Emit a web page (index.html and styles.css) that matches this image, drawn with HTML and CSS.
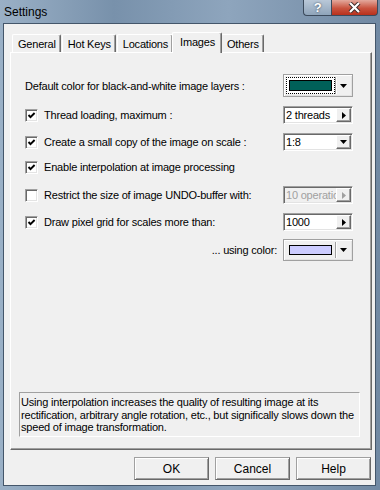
FILE: index.html
```html
<!DOCTYPE html>
<html lang="en">
<head>
    <meta charset="UTF-8">
    <title>Settings</title>
    <link rel="stylesheet" href="styles.css">
</head>
<body>
    <div class="window">
        <div class="titlebar">
            <span class="title">Settings</span>
            <div class="caption">
                <span class="cap cap-help">?</span>
                <span class="cap cap-close">
                    <svg width="13" height="11" viewBox="0 0 13 11"><path d="M2 1 L11 10 M11 1 L2 10" stroke="#3a2a2a" stroke-width="4"/><path d="M2 1 L11 10 M11 1 L2 10" stroke="#fff" stroke-width="2.2"/></svg>
                </span>
            </div>
        </div>
        <div class="client">
            <div class="tabs">
                <div class="tab">General</div>
                <div class="tab">Hot Keys</div>
                <div class="tab">Locations</div>
                <div class="tab active">Images</div>
                <div class="tab">Others</div>
            </div>
            <div class="panel">
                <div class="row row-first">
                    <span class="label">Default color for black-and-white image layers :</span>
                    <div class="colorbox tall">
                        <span class="focus"><span class="swatch teal"></span></span>
                        <span class="drop"><svg width="7" height="4"><polygon points="0,0 7,0 3.5,4" fill="#000"/></svg></span>
                    </div>
                </div>
                <div class="row">
                    <label class="check"><span class="box on"></span>Thread loading, maximum :</label>
                    <div class="field"><span class="value">2 threads</span><span class="btn"><svg width="4" height="7"><polygon points="0,0 4,3.5 0,7" fill="#000"/></svg></span></div>
                </div>
                <div class="row">
                    <label class="check"><span class="box on"></span>Create a small copy of the image on scale :</label>
                    <div class="field"><span class="value">1:8</span><span class="btn"><svg width="7" height="4"><polygon points="0,0 7,0 3.5,4" fill="#000"/></svg></span></div>
                </div>
                <div class="row row-plain">
                    <label class="check"><span class="box on"></span>Enable interpolation at image processing</label>
                </div>
                <div class="row row-gap">
                    <label class="check"><span class="box"></span>Restrict the size of image UNDO-buffer with:</label>
                    <div class="field disabled"><span class="value">10 operatio</span><span class="btn"><svg width="4" height="7"><polygon points="0,0 4,3.5 0,7" fill="#a0a0a0"/></svg></span></div>
                </div>
                <div class="row">
                    <label class="check"><span class="box on"></span>Draw pixel grid for scales more than:</label>
                    <div class="field"><span class="value">1000</span><span class="btn"><svg width="4" height="7"><polygon points="0,0 4,3.5 0,7" fill="#000"/></svg></span></div>
                </div>
                <div class="row row-color">
                    <span class="label label-right">... using color:</span>
                    <div class="colorbox">
                        <span class="plain"><span class="swatch lilac"></span></span>
                        <span class="drop"><svg width="7" height="4"><polygon points="0,0 7,0 3.5,4" fill="#000"/></svg></span>
                    </div>
                </div>
                <div class="info">Using interpolation increases the quality of resulting image at its rectification, arbitrary angle rotation, etc., but significally slows down the speed of image transformation.</div>
            </div>
            <div class="buttons">
                <button class="push">OK</button>
                <button class="push">Cancel</button>
                <button class="push">Help</button>
            </div>
        </div>
    </div>
</body>
</html>
```

FILE: styles.css
```css
body {
    margin: 0;
    font-family: "Liberation Sans", Arial, sans-serif;
    font-size: 11px;
    letter-spacing: -0.2px;
    color: #000;
}

.window {
    width: 380px;
    height: 490px;
    box-sizing: border-box;
    padding: 0 4px 4px 3px;
    display: flex;
    flex-direction: column;
    background: linear-gradient(90deg, #9ab0c6 0%, #7891ab 30%, #8ea5bd 60%, #7189a3 100%);
}

.titlebar {
    height: 23px;
    display: flex;
    justify-content: space-between;
    align-items: flex-start;
}

.title {
    font-size: 12px;
    letter-spacing: 0;
    margin: 5px 0 0 1px;
}

.caption {
    display: flex;
    margin-right: -2px;
}

.cap {
    height: 16px;
    box-sizing: border-box;
    border: 1px solid #3b4a5c;
    border-top: none;
    display: flex;
    align-items: center;
    justify-content: center;
}

.cap-help {
    width: 28px;
    border-radius: 0 0 0 4px;
    border-right: none;
    background: linear-gradient(#b9c8d8, #8fa4ba);
    color: #fff;
    font-weight: bold;
    font-size: 13px;
    text-shadow: 0 0 2px #2d3a48;
}

.cap-close {
    width: 47px;
    border-radius: 0 0 4px 0;
    background: linear-gradient(#e3a99d, #c9533f 55%, #b8301c);
}

.client {
    flex: 1;
    display: flex;
    flex-direction: column;
    background: #f0f0f0;
    border: 1px solid #44566a;
    padding: 0 3px 5px 6px;
}

.tabs {
    height: 28px;
    display: flex;
    align-items: flex-end;
    padding-left: 2px;
}

.tab {
    height: 18px;
    box-sizing: border-box;
    padding: 3px 4px 0 5px;
    border: 1px solid;
    border-color: #fff #696969 transparent #fff;
    border-bottom: none;
    box-shadow: inset -1px 0 #a0a0a0;
    border-radius: 2px 2px 0 0;
    margin-right: 1px;
    white-space: nowrap;
}

.tab.active {
    position: relative;
    height: 21px;
    margin: 0 -1px -1px -2px;
    padding: 3px 6px 0 7px;
    background: #f0f0f0;
    z-index: 1;
}

.panel {
    height: 398px;
    box-sizing: border-box;
    border: 1px solid;
    border-color: #fff #696969 #696969 #fff;
    box-shadow: inset -1px -1px #a0a0a0;
    padding: 21px 18px 12px 14px;
    display: flex;
    flex-direction: column;
}

.row {
    height: 18px;
    margin-top: 9px;
    display: flex;
    align-items: center;
    justify-content: space-between;
}

.row-first {
    height: 23px;
    margin-top: 0;
}

.row-plain {
    margin-top: 7px;
}

.row-gap {
    margin-top: 10px;
}

.row-color {
    height: 22px;
    margin-top: 8px;
    justify-content: flex-end;
}

.label-right {
    margin-right: 6px;
}

.check {
    display: flex;
    align-items: center;
}

.box {
    width: 13px;
    height: 13px;
    box-sizing: border-box;
    border: 1px solid;
    border-color: #a0a0a0 #fff #fff #a0a0a0;
    box-shadow: inset 1px 1px #696969, inset -1px -1px #e3e3e3;
    background: #fff;
    margin-right: 6px;
}

.box.on {
    background: #fff url("data:image/svg+xml;utf8,<svg xmlns='http://www.w3.org/2000/svg' width='11' height='11'><polyline points='2.5,5 4.5,7.2 8.6,3' fill='none' stroke='black' stroke-width='1.9'/></svg>") no-repeat center;
}

.field {
    width: 70px;
    height: 18px;
    box-sizing: border-box;
    border: 1px solid;
    border-color: #a0a0a0 #fff #fff #a0a0a0;
    box-shadow: inset 1px 1px #696969, inset -1px -1px #e3e3e3;
    background: #fff;
    display: flex;
    padding: 1px;
}

.field .value {
    flex: 1;
    overflow: hidden;
    white-space: nowrap;
    padding-left: 1px;
    line-height: 15px;
}

.field .btn {
    width: 15px;
    box-sizing: border-box;
    border: 1px solid;
    border-color: #fff #696969 #696969 #fff;
    box-shadow: inset -1px -1px #a0a0a0;
    background: #f0f0f0;
    display: flex;
    align-items: center;
    justify-content: center;
}

.field.disabled {
    background: #f0f0f0;
    color: #a0a0a0;
}

.colorbox {
    width: 70px;
    height: 22px;
    box-sizing: border-box;
    border: 1px solid #a0a0a0;
    box-shadow: inset 1px 1px #fff, inset -1px -1px #e3e3e3;
    background: #f0f0f0;
    display: flex;
    padding: 2px 1px 2px 2px;
}

.colorbox.tall {
    height: 23px;
}

.focus,
.plain {
    flex: 1;
    padding: 2px;
    border: 1px dotted #000;
    display: flex;
}

.focus {
    background: #fff;
}

.plain {
    border-color: transparent;
}

.swatch {
    flex: 1;
    border: 1px solid #000;
}

.teal {
    background: #006059;
}

.lilac {
    background: #ccccff;
}

.drop {
    width: 15px;
    border-left: 1px solid #a0a0a0;
    box-shadow: inset 1px 0 #fff;
    display: flex;
    align-items: center;
    justify-content: center;
}

.info {
    margin: auto -7px 0 -6px;
    height: 45px;
    box-sizing: border-box;
    border: 1px solid;
    border-color: #a0a0a0 #fff #fff #a0a0a0;
    padding: 3px 1px;
    line-height: 12.7px;
}

.buttons {
    display: flex;
    justify-content: flex-end;
    gap: 6px;
    margin: 7px 1px 0 0;
}

.push {
    width: 75px;
    height: 23px;
    font: inherit;
    font-size: 12px;
    letter-spacing: 0;
    border: 1px solid;
    border-color: #a0a0a0 #696969 #696969 #a0a0a0;
    box-shadow: inset 1px 1px #fff, inset -1px -1px #a0a0a0;
    background: #f0f0f0;
    padding: 0;
}
```
